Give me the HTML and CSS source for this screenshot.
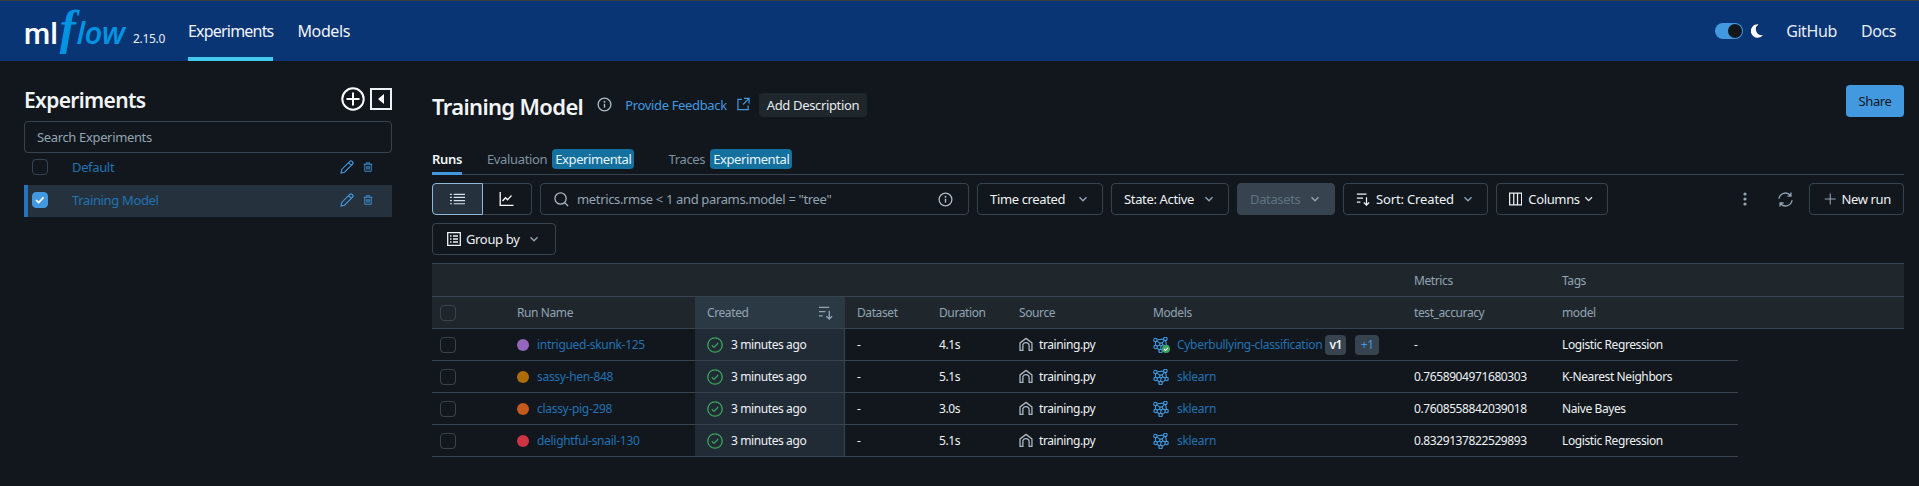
FILE: index.html
```html
<!DOCTYPE html>
<html lang="en">
<head>
<meta charset="utf-8">
<title>MLflow</title>
<link rel="stylesheet" href="styles.css">
</head>
<body>
<svg class="defs" width="0" height="0">
  <symbol id="i-chev" viewBox="0 0 16 16"><path d="M4 6l4 4 4-4" fill="none" stroke="currentColor" stroke-width="1.6"/></symbol>
  <symbol id="i-info" viewBox="0 0 16 16"><circle cx="8" cy="8" r="6.8" fill="none" stroke="currentColor" stroke-width="1.4"/><path d="M8 7.2v4.2" stroke="currentColor" stroke-width="1.5"/><circle cx="8" cy="5" r="1" fill="currentColor"/></symbol>
  <symbol id="i-check" viewBox="0 0 16 16"><circle cx="8" cy="8" r="7.2" fill="none" stroke="currentColor" stroke-width="1.3"/><path d="M4.8 8.2l2.2 2.2 4.2-4.4" fill="none" stroke="currentColor" stroke-width="1.3"/></symbol>
  <symbol id="i-home" viewBox="0 0 16 16"><path d="M1.200 14.800V6.200L8 1l6.800 5.200v8.600h-3.200V9.400a3.600 3.600 0 0 0-7.200 0v5.400z" fill="none" stroke="currentColor" stroke-width="1.500"/></symbol>
  <symbol id="i-model" viewBox="0 0 16 16"><g fill="none" stroke="currentColor" stroke-width="1.150"><circle cx="2.400" cy="2.900" r="1.700"/><circle cx="12.400" cy="1.900" r="1.700"/><circle cx="8.200" cy="7.300" r="1.500"/><circle cx="2.600" cy="10" r="1.700"/><circle cx="13.600" cy="10" r="1.700"/><circle cx="7.600" cy="14.100" r="1.700"/><path d="M4.100 2.700l6.600-.6M3.800 3.900l3.200 2.500M11.300 3.300L9.200 6M9.600 7.800l2.600 1.300M6.800 7.900L4.200 9.300M4 11l2.200 2M9.200 13.300l3.200-2.200M8 8.800l-.3 3.600M2.500 4.600v3.700M12.700 3.600l.7 4.700"/></g></symbol>
  <symbol id="i-sort" viewBox="0 0 16 16"><path d="M1 2.500h11M1 7h7M1 11.500h4M12 6v9M9 12l3 3 3-3" fill="none" stroke="currentColor" stroke-width="1.4"/></symbol>
  <symbol id="i-pencil" viewBox="0 0 16 16"><path d="M1.200 14.800l.8-4L11.200 1.600a1.800 1.800 0 0 1 2.500 0l.7.7a1.800 1.800 0 0 1 0 2.500L5.200 14zM9.800 3l3.200 3.200" fill="none" stroke="currentColor" stroke-width="1.3"/></symbol>
  <symbol id="i-trash" viewBox="0 0 16 16"><path d="M1 3.500h14M5.500 3.500V1.200h5v2.300M2.800 3.500v11.300h10.400V3.500M6 6.500v5.500M8 6.500v5.500M10 6.500v5.500" fill="none" stroke="currentColor" stroke-width="1.400"/></symbol>
</svg>

<header class="topbar">
  <div class="brand">
    <span class="logo"><span class="logo-ml">ml</span><span class="logo-f">f</span><span class="logo-low">low</span></span>
    <span class="version">2.15.0</span>
  </div>
  <nav class="nav">
    <a class="nav-link nav-active">Experiments</a>
    <a class="nav-link">Models</a>
  </nav>
  <div class="top-right">
    <span class="toggle"><span class="knob"></span></span>
    <svg class="moon" viewBox="0 0 12 14"><path d="M7.400 .4A6.700 6.700 0 1 0 11.800 11.200 6 6 0 0 1 7.400 .4z" fill="#fff"/></svg>
    <a class="top-link github">GitHub</a>
    <a class="top-link">Docs</a>
  </div>
</header>

<div class="page">
  <aside class="sidebar">
    <div class="side-head">
      <h1 class="side-title">Experiments</h1>
      <svg class="side-plus" viewBox="0 0 24 24"><circle cx="12" cy="12" r="10.700" fill="none" stroke="#fff" stroke-width="2"/><path d="M12 5.500v13M5.500 12h13" stroke="#fff" stroke-width="2"/></svg>
      <svg class="side-collapse" viewBox="0 0 22 22"><rect x="1" y="1" width="20" height="20" fill="none" stroke="#eef1f3" stroke-width="2"/><path d="M14 6v10l-6-5z" fill="#fff"/></svg>
    </div>
    <div class="side-search">Search Experiments</div>
    <div class="exp-row">
      <span class="cbox"></span>
      <span class="exp-name">Default</span>
      <svg class="ic-pencil"><use href="#i-pencil"/></svg>
      <svg class="ic-trash"><use href="#i-trash"/></svg>
    </div>
    <div class="exp-row exp-active">
      <span class="cbox cbox-on"><svg viewBox="0 0 16 16"><path d="M3.500 8.200l3 2.800 5.500-6" fill="none" stroke="#fff" stroke-width="2"/></svg></span>
      <span class="exp-name">Training Model</span>
      <svg class="ic-pencil"><use href="#i-pencil"/></svg>
      <svg class="ic-trash"><use href="#i-trash"/></svg>
    </div>
  </aside>

  <main class="main">
    <div class="title-row">
      <h2 class="title">Training Model</h2>
      <svg class="title-info"><use href="#i-info"/></svg>
      <a class="feedback">Provide Feedback</a>
      <svg class="ext" viewBox="0 0 14 14"><path d="M5.500 2H1v11h11V8.500M7.500 1H13v5.500M13 1L6.500 7.500" fill="none" stroke="currentColor" stroke-width="1.300"/></svg>
      <span class="add-desc">Add Description</span>
      <span class="share">Share</span>
    </div>

    <div class="tabs">
      <span class="tab tab-on">Runs</span>
      <span class="tab tab-eval">Evaluation</span><span class="badge">Experimental</span>
      <span class="tab tab-traces">Traces</span><span class="badge">Experimental</span>
    </div>

    <div class="toolbar">
      <div class="seg">
        <span class="seg-btn seg-on"><svg viewBox="0 0 16 12"><path d="M0 1h2M4 1h12M0 4.300h2M4 4.300h12M0 7.700h2M4 7.700h12M0 11h2M4 11h12" stroke="#d7e2ea" stroke-width="1.200"/></svg></span>
        <span class="seg-btn"><svg viewBox="0 0 14 14"><path d="M.7 0v13.300H14M3 9l3-3.300 2 2 4-4.200" fill="none" stroke="#fff" stroke-width="1.300"/></svg></span>
      </div>
      <div class="search">
        <svg class="search-ic" viewBox="0 0 16 16"><circle cx="7" cy="7" r="6" fill="none" stroke="currentColor" stroke-width="1.400"/><path d="M11.300 11.300L15 15" stroke="currentColor" stroke-width="1.400"/></svg>
        <span class="search-text">metrics.rmse &lt; 1 and params.model = "tree"</span>
        <svg class="search-info"><use href="#i-info"/></svg>
      </div>
      <span class="btn w-time">Time created<svg class="chev"><use href="#i-chev"/></svg></span>
      <span class="btn w-state">State: Active<svg class="chev"><use href="#i-chev"/></svg></span>
      <span class="btn btn-off w-data">Datasets<svg class="chev"><use href="#i-chev"/></svg></span>
      <span class="btn w-sort"><svg class="btn-ic"><use href="#i-sort"/></svg>Sort: Created<svg class="chev"><use href="#i-chev"/></svg></span>
      <span class="btn w-cols"><svg class="btn-ic" viewBox="0 0 14 14"><path d="M.7.700h12.600v12.600H.7zM5 .7v12.600M9 .7v12.600" fill="none" stroke="currentColor" stroke-width="1.300"/></svg>Columns<svg class="chev chev-tight"><use href="#i-chev"/></svg></span>
      <span class="tool-spacer"></span>
      <svg class="kebab" viewBox="0 0 4 14"><circle cx="2" cy="2" r="1.600"/><circle cx="2" cy="7" r="1.600"/><circle cx="2" cy="12" r="1.600"/></svg>
      <svg class="refresh" viewBox="0 0 16 16"><path d="M1 7.200A7 7 0 0 1 13.200 3.500M15 8.800A7 7 0 0 1 2.800 12.500M13.800 .5v3.800H10M2.200 15.500v-3.800H6" fill="none" stroke="currentColor" stroke-width="1.400"/></svg>
      <span class="btn w-new"><svg class="plus" viewBox="0 0 16 16"><path d="M8 1v14M1 8h14" stroke="currentColor" stroke-width="1.400"/></svg>New run</span>
    </div>

    <div class="toolbar">
      <span class="btn w-group"><svg class="group-ic" viewBox="0 0 14 14"><path d="M.7.700h12.600v12.600H.7zM3 4h1.500M6 4h5M3 7h1.500M6 7h5M3 10h1.500M6 10h5" fill="none" stroke="currentColor" stroke-width="1.300"/></svg>Group by<svg class="chev"><use href="#i-chev"/></svg></span>
    </div>

    <div class="table">
      <div class="tr tr-group">
        <span></span><span></span><span></span><span></span><span></span><span></span><span></span>
        <span class="th">Metrics</span><span class="th">Tags</span>
      </div>
      <div class="tr tr-head">
        <span class="td-check"><span class="cbox"></span></span>
        <span class="th">Run Name</span>
        <span class="th th-created">Created<svg class="th-sort"><use href="#i-sort"/></svg></span>
        <span class="th">Dataset</span><span class="th">Duration</span><span class="th">Source</span><span class="th">Models</span>
        <span class="th">test_accuracy</span><span class="th">model</span>
      </div>

      <div class="tr">
        <span class="td-check"><span class="cbox"></span></span>
        <span class="td"><i class="dot dot-a"></i><a class="link">intrigued-skunk-125</a></span>
        <span class="td td-created"><svg class="ok"><use href="#i-check"/></svg>3 minutes ago</span>
        <span class="td">-</span><span class="td">4.1s</span>
        <span class="td"><svg class="home"><use href="#i-home"/></svg>training.py</span>
        <span class="td">
          <span class="model-wrap"><svg class="model"><use href="#i-model"/></svg><svg class="model-ok" viewBox="0 0 8 8"><circle cx="4" cy="4" r="4" fill="#3aa55d"/><path d="M2 4l1.500 1.500L6 2.800" fill="none" stroke="#fff" stroke-width="1.100"/></svg></span>
          <a class="link">Cyberbullying-classification</a><span class="pill">v1</span><span class="pill pill-more">+1</span>
        </span>
        <span class="td">-</span><span class="td">Logistic Regression</span>
      </div>
      <div class="tr">
        <span class="td-check"><span class="cbox"></span></span>
        <span class="td"><i class="dot dot-b"></i><a class="link">sassy-hen-848</a></span>
        <span class="td td-created"><svg class="ok"><use href="#i-check"/></svg>3 minutes ago</span>
        <span class="td">-</span><span class="td">5.1s</span>
        <span class="td"><svg class="home"><use href="#i-home"/></svg>training.py</span>
        <span class="td"><svg class="model"><use href="#i-model"/></svg><a class="link">sklearn</a></span>
        <span class="td">0.7658904971680303</span><span class="td">K-Nearest Neighbors</span>
      </div>
      <div class="tr">
        <span class="td-check"><span class="cbox"></span></span>
        <span class="td"><i class="dot dot-c"></i><a class="link">classy-pig-298</a></span>
        <span class="td td-created"><svg class="ok"><use href="#i-check"/></svg>3 minutes ago</span>
        <span class="td">-</span><span class="td">3.0s</span>
        <span class="td"><svg class="home"><use href="#i-home"/></svg>training.py</span>
        <span class="td"><svg class="model"><use href="#i-model"/></svg><a class="link">sklearn</a></span>
        <span class="td">0.7608558842039018</span><span class="td">Naive Bayes</span>
      </div>
      <div class="tr">
        <span class="td-check"><span class="cbox"></span></span>
        <span class="td"><i class="dot dot-d"></i><a class="link">delightful-snail-130</a></span>
        <span class="td td-created"><svg class="ok"><use href="#i-check"/></svg>3 minutes ago</span>
        <span class="td">-</span><span class="td">5.1s</span>
        <span class="td"><svg class="home"><use href="#i-home"/></svg>training.py</span>
        <span class="td"><svg class="model"><use href="#i-model"/></svg><a class="link">sklearn</a></span>
        <span class="td">0.8329137822529893</span><span class="td">Logistic Regression</span>
      </div>
    </div>
  </main>
</div>
</body>
</html>
```
FILE: styles.css
```css
* { box-sizing: border-box; }
html, body { margin: 0; height: 100%; }
body {
  background: #11171c;
  color: #e8ecf0;
  font-family: "Noto Sans", "Open Sans", sans-serif;
  font-size: 13px;
  letter-spacing: -0.35px;
  overflow: hidden;
}
.defs { position: absolute; }
h1, h2 { margin: 0; }

/* top bar */
.topbar {
  height: 61px;
  display: flex;
  align-items: stretch;
  background: #0a3575;
  border-top: 1px solid #3b3b3b;
  padding: 0 23px 0 24px;
}
.brand { width: 164px; display: flex; align-items: flex-start; position: relative; }
.logo { display: flex; align-items: baseline; height: 50px; line-height: 1; padding-top: 12px; }
.logo-ml { font: 500 30px/30px "Roboto", sans-serif; color: #fff; letter-spacing: 0; }
.logo-f { font: italic 700 48px/30px "Liberation Serif", serif; color: #0194e2; margin-left: 2px; }
.logo-low { font: italic 600 31px/30px "Open Sans", sans-serif; color: #0194e2; letter-spacing: -0.5px; margin-left: 1px; }
.version { position: absolute; left: 109px; top: 29px; font-size: 12px; letter-spacing: -0.3px; color: #e6edf3; }
.nav { display: flex; gap: 24px; }
.nav-link {
  display: flex;
  align-items: center;
  font-size: 16px;
  letter-spacing: -0.4px;
  color: #f0f4f7;
  border-bottom: 4px solid transparent;
  border-top: 4px solid transparent;
}
.nav-active { border-bottom-color: #43c9ed; letter-spacing: -0.8px; }
.top-right { margin-left: auto; display: flex; align-items: center; }
.toggle {
  width: 28px; height: 16px;
  border-radius: 8px;
  background: #4299e0;
  display: flex;
  justify-content: flex-end;
  align-items: center;
  padding: 0 1px;
}
.knob { width: 14px; height: 14px; border-radius: 50%; background: #11171c; }
.moon { width: 12px; height: 14px; margin-left: 8px; }
.top-link { font-size: 16px; letter-spacing: -0.4px; color: #e6edf3; }
.github { margin-left: 23px; margin-right: 24px; }

/* page */
.page { display: flex; align-items: flex-start; }

/* sidebar */
.sidebar { width: 368px; margin-left: 24px; margin-top: 24px; flex: none; }
.side-head { display: flex; align-items: flex-start; height: 36px; }
.side-title { font-size: 21px; font-weight: 600; letter-spacing: -0.65px; color: #f2f5f7; line-height: 30px; margin-right: auto; }
.side-plus { width: 24px; height: 24px; margin-top: 2px; }
.side-collapse { width: 22px; height: 22px; margin-left: 5px; margin-top: 3px; }
.side-search {
  height: 32px;
  border: 1px solid #37444f;
  border-radius: 4px;
  padding: 0 12px;
  display: flex;
  align-items: center;
  color: #92a4b3;
}
.exp-row { height: 32px; display: flex; align-items: center; padding-left: 8px; padding-bottom: 4px; }
.exp-active { background: #25323d; box-shadow: inset 4px 0 0 #2374bb; padding-bottom: 2px; }
.exp-name { color: #2272b4; margin-left: 24px; margin-right: auto; }
.cbox {
  width: 16px; height: 16px;
  display: block;
  flex: none;
  border: 1px solid #37444f;
  border-radius: 4px;
}
.cbox-on { background: #4299e0; border-color: #4299e0; }
.cbox-on svg { display: block; width: 14px; height: 14px; }
.ic-pencil { width: 14px; height: 14px; color: #4299e0; margin-right: 9px; }
.ic-trash { width: 10px; height: 12px; color: #4299e0; margin-right: 19px; }

/* main */
.main { margin-left: 40px; width: 1472px; flex: none; padding-top: 24px; }
.title-row { display: flex; align-items: flex-end; height: 32px; }
.title { font-size: 22px; font-weight: 600; letter-spacing: -0.65px; color: #f2f5f7; line-height: 24px; margin-bottom: -1px; }
.title-info { width: 15px; height: 15px; color: #afbbc5; margin-left: 14px; margin-bottom: 5px; }
.feedback { color: #4299e0; margin-left: 13px; line-height: 24px; }
.ext { width: 13px; height: 14px; color: #4299e0; margin-left: 10px; margin-bottom: 6px; }
.add-desc {
  margin-left: 9px;
  height: 24px;
  padding: 0 8px;
  display: flex;
  align-items: center;
  border-radius: 4px;
  background: #1f272d;
}
.share {
  margin-left: auto;
  width: 58px; height: 32px;
  display: flex; align-items: center; justify-content: center;
  background: #4299e0;
  color: #11171c;
  border-radius: 4px;
}

.tabs { margin-top: 28px; height: 30px; display: flex; border-bottom: 1px solid #37444f; align-items: stretch; }
.tab { color: #7f92a1; height: 30px; display: flex; align-items: center; padding-bottom: 3px; }
.tab-on { color: #f2f5f7; font-weight: 600; border-bottom: 3px solid #4299e0; padding-bottom: 0; }
.tab-eval { margin-left: 25px; }
.tab-traces { margin-left: 34px; }
.badge {
  align-self: flex-start;
  margin: 4px 0 0 5px;
  height: 20px;
  padding: 0 3px;
  display: flex; align-items: center;
  border-radius: 4px;
  background: #14709f;
  color: #e8f4fb;
  letter-spacing: -0.4px;
}

/* toolbar */
.toolbar { display: flex; gap: 8px; margin-top: 8px; align-items: center; height: 32px; }
.seg { display: flex; width: 100px; height: 32px; flex: none; }
.seg-btn {
  flex: 1;
  display: flex; align-items: center; justify-content: center;
  border: 1px solid #37444f;
  border-left: 0;
  border-radius: 0 4px 4px 0;
}
.seg-btn svg { width: 15px; height: 14px; }
.seg-on { background: #25323d; border: 1px solid #8fb9d6; border-radius: 4px 0 0 4px; }
.search {
  flex: none;
  width: 429px; height: 32px;
  border: 1px solid #37444f;
  border-radius: 4px;
  display: flex; align-items: center;
  padding: 0 15px 0 13px;
  color: #92a4b3;
}
.search-ic { width: 15px; height: 15px; color: #a9b6c1; margin-right: 8px; }
.search-text { margin-right: auto; }
.search-info { width: 15px; height: 15px; color: #afbbc5; }
.btn {
  flex: none;
  height: 32px;
  display: flex; align-items: center;
  padding: 0 12px;
  border: 1px solid #37444f;
  border-radius: 4px;
  color: #eef2f5;
  white-space: nowrap;
}
.chev { width: 14px; height: 14px; color: #92a4b3; margin-left: auto; }
.chev-tight { margin-left: 2px; color: #dfe6eb; }
.btn-off { background: #37444f; color: #5f7282; }
.btn-ic { width: 14px; height: 14px; margin-right: 6px; color: #eef2f5; }
.group-ic { width: 14px; height: 14px; margin-right: 5px; }
.w-time { width: 126px; }
.w-state { width: 118px; }
.w-data { width: 98px; }
.w-sort { width: 145px; letter-spacing: -0.15px; }
.w-cols { width: 112px; }
.w-new { width: 95px; padding-left: 14px; }
.w-group { width: 124px; padding: 0 14px; }
.tool-spacer { margin-left: auto; }
.kebab { width: 4px; height: 14px; fill: #92a4b3; margin-right: 23px; }
.refresh { width: 15px; height: 15px; color: #92a4b3; margin-right: 8px; }
.plus { width: 14px; height: 14px; margin-right: 5px; color: #92a4b3; }

/* table */
.table { margin-top: 8px; border-top: 1px solid #37444f; font-size: 12px; letter-spacing: -0.4px; }
.tr {
  display: grid;
  grid-template-columns: 73px 190px 150px 82px 80px 134px 261px 148px 188px;
  width: 1306px;
  height: 32px;
  align-items: stretch;
  border-bottom: 1px solid #37444f;
}
.tr-group, .tr-head {
  width: 1472px;
  background: #1f272d;
  grid-template-columns: 73px 190px 150px 82px 80px 134px 261px 148px 354px;
}
.tr-group { height: 33px; }
.th, .td { display: flex; align-items: center; padding-left: 12px; white-space: nowrap; }
.th { color: #92a4b3; }
.td { color: #eef2f5; }
.td-check { display: flex; align-items: center; padding-left: 8px; }
.th-created { background: #2b3945; padding-right: 12px; }
.th-sort { width: 15px; height: 15px; margin-left: auto; color: #92a4b3; }
.td-created { background: #212b35; border-right: 1px solid #37444f; }
.link { color: #2272b4; letter-spacing: -0.3px; }
.dot { width: 12px; height: 12px; border-radius: 50%; margin-right: 8px; flex: none; }
.dot-a { background: #9467bd; }
.dot-b { background: #ae6c05; }
.dot-c { background: #c4581d; }
.dot-d { background: #ce3344; }
.ok { width: 16px; height: 16px; color: #3aa55d; margin-right: 8px; flex: none; }
.home { width: 14px; height: 15px; color: #aab6c0; margin-right: 6px; flex: none; }
.model-wrap { position: relative; display: flex; flex: none; }
.model { width: 16px; height: 16px; color: #4299e0; margin-right: 8px; flex: none; }
.model-ok { position: absolute; left: 9px; top: 8px; width: 8px; height: 8px; }
.pill {
  height: 20px;
  min-width: 21px;
  display: flex; align-items: center; justify-content: center;
  background: #37444f;
  border-radius: 4px;
  font-weight: 600;
  margin-left: 3px;
  color: #eef2f5;
}
.pill-more { margin-left: 9px; width: 24px; color: #4299e0; font-weight: 400; }
```
